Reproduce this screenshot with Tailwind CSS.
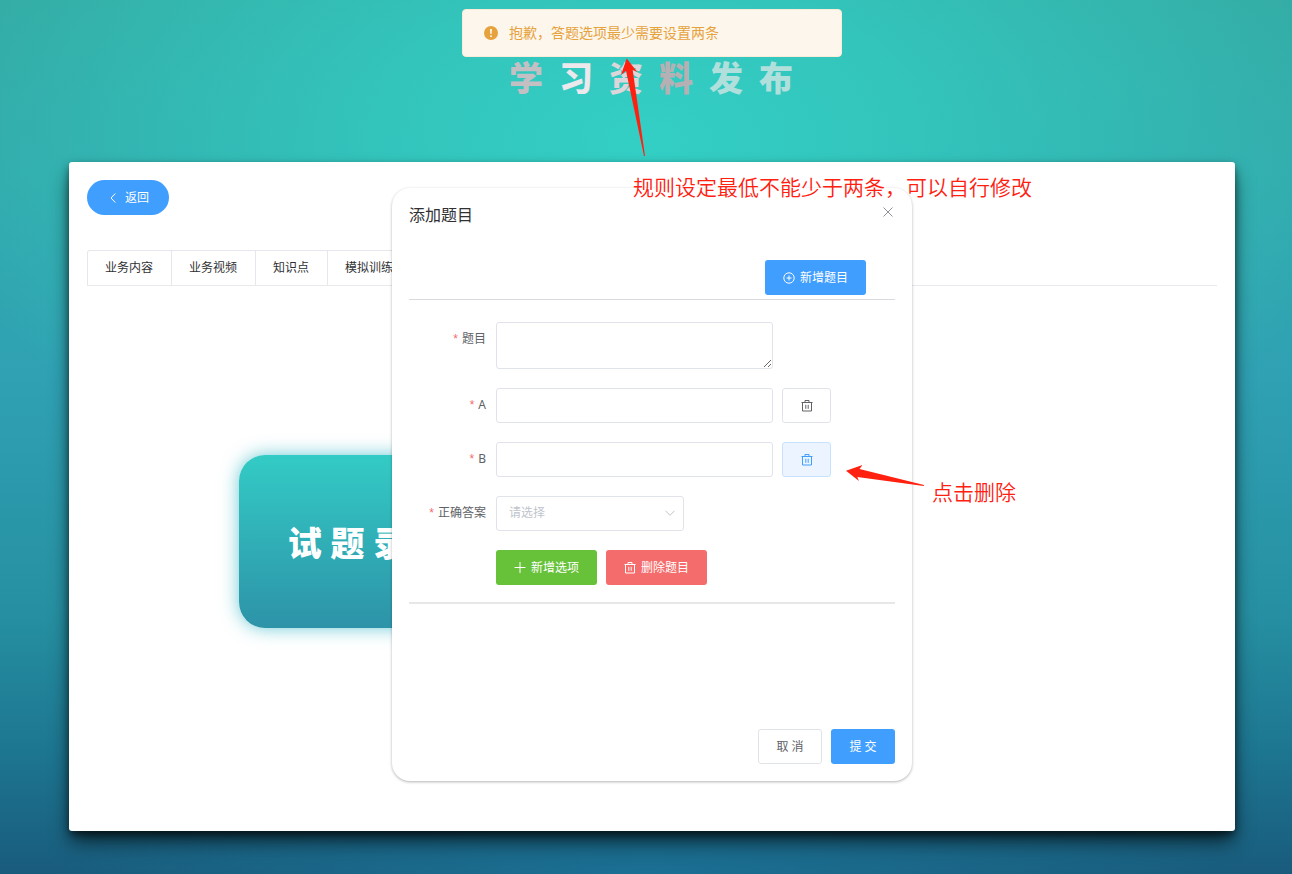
<!DOCTYPE html>
<html lang="zh-CN">
<head>
<meta charset="utf-8">
<meta name="viewport" content="width=device-width, initial-scale=1">
<title>学习资料发布</title>
<script src="https://cdn.jsdelivr.net/npm/@tailwindcss/browser@4"></script>
</head>
<body class="relative flex min-h-screen flex-col overflow-x-hidden bg-[radial-gradient(ellipse_720px_420px_at_50%_16%,#33cfc5_0%,#33cac0d9_35%,#33c4ba00_100%),radial-gradient(ellipse_600px_90px_at_50%_100%,#1b7093_0%,#1b709300_100%),linear-gradient(#34aba4_0%,#33aaac_20%,#2fa1b3_43%,#2690a2_70%,#1d7690_86%,#195b7c_100%)] pr-[57px] pb-[43px] pl-[69px] font-['Noto_Sans','Noto_Sans_CJK_SC',sans-serif] text-xs text-[#303133]">

<svg class="hidden" aria-hidden="true">
  <symbol id="trash" viewBox="0 0 12 12" fill="none" stroke="currentColor" stroke-width="1">
    <path d="M.5 2.500h11M4 2.500V.5h4v2M1.500 2.500v8.500h9V2.500M4.800 4.800v4M7.200 4.800v4"/>
  </symbol>
</svg>

<header class="pt-[53px]">
  <h1 class="flex h-[109px] justify-center gap-4 pr-[2px] text-[34px] leading-[50px] font-black">
    <span class="text-[#c4bfc3]">学</span><span class="text-[#ece8ec]">习</span><span class="text-[#dcd6da]">资</span><span class="text-[#b5b0b3]">料</span><span class="text-[#b0dfdc]">发</span><span class="text-[#b0dfdc]">布</span>
  </h1>
</header>

<main class="flex-1 rounded-[3px] bg-white px-[18px] pt-[18px] pb-[203px] shadow-[0_12px_20px_-2px_rgba(0,0,0,0.65),0_4px_8px_-1px_rgba(0,0,0,0.6)]">
  <button type="button" class="flex h-[35px] items-center gap-1.5 rounded-full bg-[#409eff] px-5 text-white">
    <svg class="size-3" viewBox="0 0 12 12" fill="none" stroke="currentColor"><path d="M8.300 1.500 4 6l4.300 4.500"/></svg>
    返回
  </button>
  <nav class="mt-[35px] flex border-b border-[#e8eaef]">
    <div class="flex divide-x divide-[#e4e7ed] rounded-t-[3px] border border-b-0 border-[#e4e7ed] leading-[34px]">
      <a href="#content" class="pr-[18px] pl-[17px]">业务内容</a>
      <a href="#video" class="pr-[18px] pl-[17px]">业务视频</a>
      <a href="#knowledge" class="pr-[18px] pl-[17px]">知识点</a>
      <a href="#practice" class="pr-[18px] pl-[17px]">模拟训练</a>
    </div>
  </nav>
  <a href="#questions" class="mt-[169px] ml-[152px] flex h-[173px] w-[260px] items-center justify-center rounded-[26px] bg-linear-to-b from-[#33cbc5] to-[#2d93a8] pt-1 text-[34px] font-black text-white shadow-[0_0_18px_rgba(45,180,195,0.7)]">试 题 录 入</a>
</main>

<!-- 添加题目 dialog -->
<section role="dialog" aria-labelledby="dialog-title" class="absolute top-[188px] left-1/2 ml-[6px] flex min-h-[593px] w-[520px] -translate-x-1/2 flex-col rounded-[18px] bg-white px-[17px] pt-[17px] pb-[17px] shadow-[0_1px_3px_rgba(0,0,0,0.3)]">
  <div class="flex justify-between">
    <h2 id="dialog-title" class="text-base leading-5">添加题目</h2>
    <button type="button" aria-label="关闭" class="size-3.5 text-[#909399]">
      <svg class="size-3.5" viewBox="0 0 14 14" fill="none" stroke="currentColor"><path d="m2.500 2.500 9 9m0-9-9 9"/></svg>
    </button>
  </div>
  <form class="mt-[35px] flex flex-1 flex-col text-[#606266]">
    <div class="flex justify-end border-b border-[#d8dadd] pr-[29px] pb-1">
      <button type="button" class="flex h-[35px] items-center gap-[5px] rounded-[3px] bg-[#409eff] px-[18px] text-white">
        <svg class="size-3" viewBox="0 0 12 12" fill="none" stroke="currentColor"><circle cx="6" cy="6" r="5.200"/><path d="M3.500 6h5M6 3.500v5"/></svg>
        新增题目
      </button>
    </div>
    <div class="grid grid-cols-[77px_1fr] gap-x-2.5 gap-y-[19px] border-b-2 border-[#e6e7e9] pt-[22px] pb-[17px] leading-[34px]">
      <label for="question" class="text-right"><span class="mr-1 font-['Liberation_Sans'] text-[#f56c6c]">*</span>题目</label>
      <textarea id="question" class="h-[47px] w-[277px] resize rounded-[3px] border border-[#e0e3e9] px-3"></textarea>

      <label for="option-a" class="text-right"><span class="mr-1 font-['Liberation_Sans'] text-[#f56c6c]">*</span>A</label>
      <div class="flex gap-[9px]">
        <input id="option-a" type="text" class="h-[35px] w-[277px] rounded-[3px] border border-[#e0e3e9] px-3">
        <button type="button" aria-label="删除选项 A" class="flex h-[35px] w-[49px] items-center justify-center rounded-[3px] border border-[#e0e3e9]"><svg class="size-3"><use href="#trash"/></svg></button>
      </div>

      <label for="option-b" class="text-right"><span class="mr-1 font-['Liberation_Sans'] text-[#f56c6c]">*</span>B</label>
      <div class="flex gap-[9px]">
        <input id="option-b" type="text" class="h-[35px] w-[277px] rounded-[3px] border border-[#e0e3e9] px-3">
        <button type="button" aria-label="删除选项 B" class="flex h-[35px] w-[49px] items-center justify-center rounded-[3px] border border-[#c6e2ff] bg-[#ecf5ff] text-[#409eff]"><svg class="size-3"><use href="#trash"/></svg></button>
      </div>

      <label for="answer" class="text-right whitespace-nowrap"><span class="mr-1 font-['Liberation_Sans'] text-[#f56c6c]">*</span>正确答案</label>
      <div class="relative w-[188px]">
        <select id="answer" class="block h-[35px] w-full appearance-none rounded-[3px] border border-[#e0e3e9] bg-white px-3 pb-0.5 leading-4 text-[#c0c4cc]">
          <option>请选择</option><option>A</option><option>B</option>
        </select>
        <svg class="pointer-events-none absolute top-[11px] right-2 size-3 text-[#c0c4cc]" viewBox="0 0 12 12" fill="none" stroke="currentColor"><path d="M1.500 3.800 6 8.300l4.500-4.500"/></svg>
      </div>

      <div class="col-start-2 flex gap-[9px] text-white">
        <button type="button" class="flex h-[35px] items-center gap-[5px] rounded-[3px] bg-[#67c23a] px-[18px]">
          <svg class="size-3" viewBox="0 0 12 12" fill="none" stroke="currentColor"><path d="M.5 5.500h11M6 0v11"/></svg>
          新增选项
        </button>
        <button type="button" class="flex h-[35px] items-center gap-[5px] rounded-[3px] bg-[#f56c6c] px-[18px]">
          <svg class="size-3"><use href="#trash"/></svg>
          删除题目
        </button>
      </div>
    </div>
    <div class="mt-auto flex justify-end gap-[9px]">
      <button type="button" class="h-[35px] w-16 rounded-[3px] border border-[#e0e3e9]">取 消</button>
      <button type="submit" class="h-[35px] w-16 rounded-[3px] bg-[#409eff] text-white">提 交</button>
    </div>
  </form>
</section>

<!-- warning message -->
<div role="alert" class="absolute top-[9px] left-1/2 ml-[6px] flex h-12 w-[380px] -translate-x-1/2 items-center gap-[11px] rounded-[4px] border border-[#faecd8] bg-[#fdf6ec] px-[21px] text-sm text-[#e6a23c]">
  <svg class="size-3.5" viewBox="0 0 14 14"><circle cx="7" cy="7" r="7" fill="currentColor"/><path d="M6.100 3h1.800l-.3 5H6.400z" fill="#fff"/><circle cx="7" cy="10.200" r=".9" fill="#fff"/></svg>
  <p>抱歉，答题选项最少需要设置两条</p>
</div>

<!-- annotations -->
<div class="pointer-events-none absolute top-0 left-1/2 h-[874px] w-[1292px] -translate-x-1/2 text-[21px] leading-[30px] font-[350] text-[#ff2010]">
  <svg class="absolute inset-0 size-full" viewBox="0 0 1292 874" fill="currentColor">
    <path d="M626.700 58.500 621 75l5-4.300 18 85.300h1L632.700 70l4.600 2z"/>
    <path d="m846 470.700 16.500-5.700-3 4L924 485l-.3 1-66.400-9 1.700 4z"/>
  </svg>
  <p class="absolute top-[172px] left-[633px] whitespace-nowrap">规则设定最低不能少于两条，可以自行修改</p>
  <p class="absolute top-[477px] left-[932px] whitespace-nowrap">点击删除</p>
</div>
</body>
</html>
